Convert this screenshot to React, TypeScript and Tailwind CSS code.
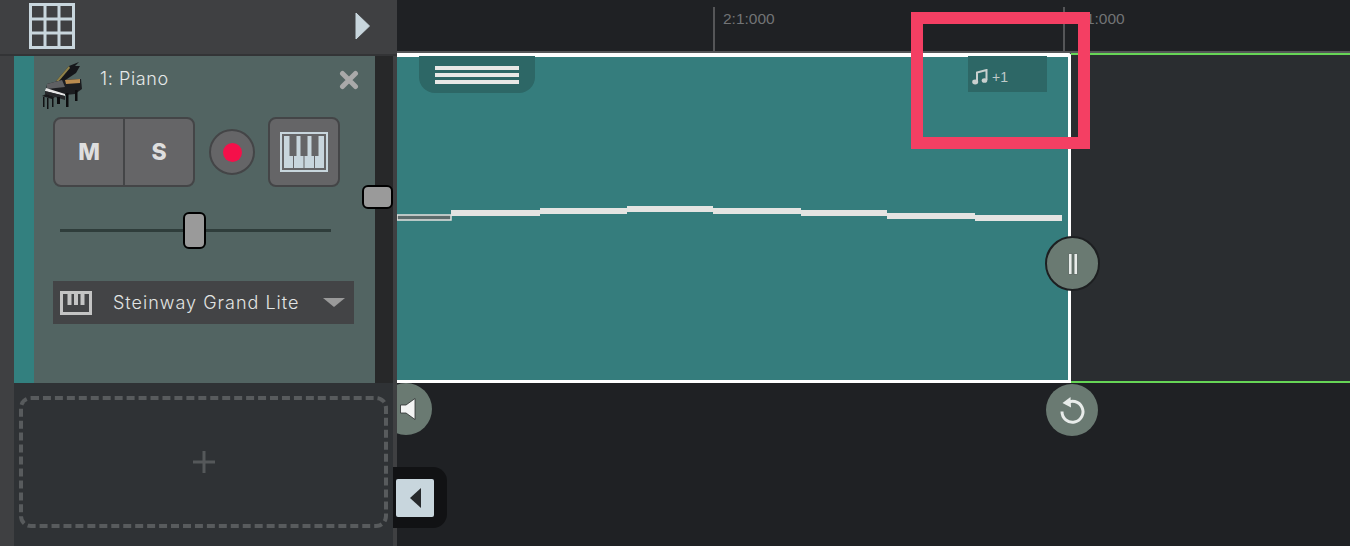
const font = { fontFamily: '"Inter", "Noto Sans", sans-serif' };

const PianoPhoto = () => (
  <svg width="42" height="48" viewBox="0 0 42 48" className="shrink-0">
    <polygon points="14,20 27,5 37,1 33,5 38,5 34,12 22,20" fill="#15161a" />
    <polygon points="14,20 27,5 28,7 17,20" fill="#8f8048" />
    <polygon points="5,23 20,19 39,18 40,28 33,33 14,35 4,30" fill="#1c1d20" />
    <polygon points="5,23 20,19 23,26 5,28" fill="#5f6063" />
    <polygon points="23,19 38,18 38,22 24,23" fill="#b98a4e" />
    <polygon points="4,27 23,33 23,35 3,30" fill="#e6e6e6" />
    <polygon points="3,30 23,35 23,39 3,33" fill="#26272a" />
    <rect x="15" y="36" width="3" height="7" fill="#0d0d0f" />
    <rect x="24" y="32" width="2.5" height="14" fill="#0d0d0f" />
    <rect x="33" y="29" width="2.5" height="11" fill="#0d0d0f" />
    <polygon points="0,35 10,38 13,36 4,33" fill="#17181a" />
    <rect x="1" y="36" width="1.5" height="10" fill="#101113" />
    <rect x="5" y="37" width="1.5" height="11" fill="#101113" />
    <rect x="10" y="37" width="1.5" height="9" fill="#101113" />
  </svg>
);

const KeysIcon = () => (
  <svg width="48" height="40" viewBox="0 0 48 40">
    <rect x="1" y="1" width="46" height="38" fill="none" stroke="#c8d6dd" strokeWidth="2" />
    <rect x="4" y="4" width="40" height="32" fill="#c8d6dd" />
    <g fill="#656567">
      <rect x="9.5" y="4" width="7" height="20" />
      <rect x="20.5" y="4" width="7" height="20" />
      <rect x="31.5" y="4" width="7" height="20" />
      <rect x="13" y="24" width="1" height="12" />
      <rect x="23.5" y="24" width="1" height="12" />
      <rect x="34" y="24" width="1" height="12" />
    </g>
  </svg>
);

const Melody = () => (
  <svg className="absolute left-0 top-0" width="668" height="323" viewBox="0 0 668 323">
    <rect x="0" y="158" width="54" height="5" fill="#5c6b6b" stroke="#e2e2e0" strokeWidth="1.5" />
    <rect x="54" y="153" width="89" height="6" fill="#e4e4e2" />
    <rect x="143" y="151" width="87" height="6" fill="#e4e4e2" />
    <rect x="230" y="149" width="86" height="6" fill="#e4e4e2" />
    <rect x="316" y="151" width="88" height="6" fill="#e4e4e2" />
    <rect x="404" y="153" width="86" height="6" fill="#e4e4e2" />
    <rect x="490" y="156" width="88" height="6" fill="#e4e4e2" />
    <rect x="578" y="158" width="87" height="6" fill="#e4e4e2" />
  </svg>
);

function Sidebar() {
  return (
    <aside className="relative z-10 flex w-[397px] shrink-0 flex-col bg-[#3f4042]" style={font}>
      <div className="flex h-[56px] shrink-0 items-center justify-between border-b-2 border-[#333436] pb-[3px] pl-[29px] pr-[27px]">
        <svg width="46" height="46" viewBox="0 0 46 46">
          <g fill="none" stroke="#c8d6dd" strokeWidth="3">
            <rect x="1.5" y="1.5" width="43" height="43" />
            <path d="M16 1.5V44.5M30 1.5V44.5M1.5 16H44.5M1.5 30H44.5" />
          </g>
        </svg>
        <svg width="15" height="28" viewBox="0 0 15 28">
          <path d="M1 1L14.5 14L1 27Z" fill="#c8d6dd" stroke="#c8d6dd" strokeLinejoin="round" />
        </svg>
      </div>

      <div className="ml-[14px] mr-[4px] flex h-[327px] shrink-0 bg-[#272829]">
        <div className="w-5 shrink-0 bg-[#33807f]" />
        <div className="flex w-[341px] shrink-0 flex-col bg-[#526462] px-[19px]">
          <div className="flex h-[61px] shrink-0 items-start">
            <div className="-ml-[11px] mt-[5px]">
              <PianoPhoto />
            </div>
            <span className="ml-[16px] mt-[13px] text-[18px] leading-5 font-light tracking-[0.6px] text-[#e6e9e8]">1: Piano</span>
            <svg className="ml-auto mr-[-3px] mt-[14px]" width="20" height="20" viewBox="0 0 20 20">
              <path d="M3.5 3.5L16.5 16.5M16.5 3.5L3.5 16.5" stroke="#a9a9a9" strokeWidth="5" strokeLinecap="round" />
            </svg>
          </div>

          <div className="flex h-[70px] shrink-0 items-center">
            <div className="flex h-full w-[142px] overflow-hidden rounded-[8px] border-2 border-[#444547] bg-[#656567] text-[23px] font-extrabold text-[#dedede]">
              <span className="flex w-[70px] items-center justify-center border-r-2 border-[#444547]">M</span>
              <span className="flex flex-1 items-center justify-center">S</span>
            </div>
            <div className="ml-[14px] flex size-[46px] items-center justify-center rounded-full border-2 border-[#444547] bg-[#656567]">
              <div className="size-[19px] rounded-full bg-[#f5104a]" />
            </div>
            <div className="ml-[13px] flex h-full w-[72px] items-center justify-center rounded-[8px] border-2 border-[#444547] bg-[#656567]">
              <KeysIcon />
            </div>
          </div>

          <div className="relative ml-[7px] mt-[25px] flex h-[37px] w-[271px] shrink-0 items-center">
            <div className="h-[3px] w-full bg-[#2f3d3b]" />
            <div className="absolute left-[123px] top-0 h-[37px] w-[23px] rounded-[6px] border-2 border-black bg-[#9a9a9a]" />
          </div>

          <div className="mt-[32px] flex h-[43px] w-[301px] shrink-0 items-center bg-[#434446] pl-[7px] pr-[9px]">
            <svg width="32" height="24" viewBox="0 0 32 24" className="shrink-0">
              <path d="M1.5 1.5H30.5V22.5H1.5Z" fill="none" stroke="#c4c4c4" strokeWidth="3" />
              <path d="M7.5 1H11.5V14H7.5ZM14 1H18V14H14ZM20.5 1H24.5V14H20.5Z" fill="#c4c4c4" />
            </svg>
            <span className="ml-[21px] text-[18px] leading-6 font-light tracking-[1px] text-[#e2e4e3]">Steinway Grand Lite</span>
            <svg className="ml-auto" width="22" height="10" viewBox="0 0 22 10">
              <path d="M0 0H22L11 9Z" fill="#9a9a9a" />
            </svg>
          </div>
        </div>
      </div>

      <div className="ml-[14px] mr-[4px] flex-1 bg-[#2f3235] pb-[18px] pl-[5px] pr-[5px] pt-[13px]">
        <div className="flex h-[132px] items-center justify-center rounded-[12px] border-4 border-dashed border-[#585b5d] text-[#55585a]">
          <svg width="22" height="22" viewBox="0 0 22 22">
            <path d="M11 0V22M0 11H22" stroke="currentColor" strokeWidth="3" />
          </svg>
        </div>
      </div>

      {/* scroll handle sits over the track panel */}
      <div className="absolute left-[362px] top-[185px] h-[24px] w-[31px] rounded-[6px] border-2 border-black bg-[#9a9a9a]" />
    </aside>
  );
}

function Timeline() {
  return (
    <main className="relative flex min-w-0 flex-1 flex-col bg-[#1f2124]">
      <div className="flex h-[53px] shrink-0 border-b-2 border-[#555658] text-[15.5px] text-[#727476]" style={{ fontFamily: '"Liberation Sans", sans-serif' }}>
        <div className="ml-[316px] mt-[7px] h-[44px] w-[350px] border-l-2 border-[#555658] pl-[8px] leading-6">2:1:000</div>
        <div className="mt-[7px] h-[44px] border-l-2 border-[#555658] pl-[8px] leading-6">3:1:000</div>
      </div>

      <div className="flex h-[330px] shrink-0">
        <div className="relative h-full w-[674px] shrink-0 rounded-tr-[3px] border-y-[3px] border-t-4 border-r-[3px] border-white bg-[#357d7d]">
          <Melody />
          <div className="absolute -top-[1px] left-[22px] flex h-[37px] w-[116px] flex-col items-center justify-center gap-[3px] rounded-b-[16px] bg-[#2d6766]">
            <div className="h-[4px] w-[84px] bg-[#e8e8e6]" />
            <div className="h-[4px] w-[84px] bg-[#e8e8e6]" />
            <div className="h-[4px] w-[84px] bg-[#e8e8e6]" />
          </div>
          <div className="absolute -top-[1px] left-[571px] flex h-[36px] w-[79px] items-center bg-[#2d6766] pl-[4px] pt-[6px] text-[14px] text-[#bfcac9]" style={{ fontFamily: '"Liberation Sans", sans-serif' }}>
            <svg width="16" height="16" viewBox="0 0 16 16">
              <path d="M5 13V3.5L14.5 1V11" fill="none" stroke="#c9d0cf" strokeWidth="2" />
              <ellipse cx="3.2" cy="13" rx="3" ry="2.4" fill="#c9d0cf" />
              <ellipse cx="12.5" cy="11.5" rx="2.8" ry="2.3" fill="#c9d0cf" />
            </svg>
            <span className="ml-[4px]">+1</span>
          </div>
        </div>
        <div className="h-full flex-1 border-y-2 border-[#66d556] bg-[#2a2d30]" />
      </div>

      <div className="flex-1" />

      {/* handles over the lane */}
      <div className="absolute left-[648px] top-[236px] flex size-[55px] items-center justify-center rounded-full border-2 border-[#1d1f21] bg-[#6a7a72]">
        <svg width="10" height="22" viewBox="0 0 10 22">
          <path d="M0.5 0.5H4V21.5H0.5ZM6 0.5H9.5V21.5H6Z" fill="#e8ecea" stroke="#55625c" strokeWidth="0.8" />
        </svg>
      </div>
      <div className="absolute left-[649px] top-[384px] flex size-[52px] items-center justify-center rounded-full bg-[#6a7a72]">
        <svg width="26" height="28" viewBox="0 0 26 28">
          <path d="M7 7.5A10.5 10.5 0 1 1 3 15.5" fill="none" stroke="#e8ecea" strokeWidth="3" />
          <path d="M11.5 1L3.5 7L12 11.5Z" fill="#e8ecea" />
        </svg>
      </div>
      <div className="absolute -left-[17px] top-[383px] flex size-[52px] items-center justify-end rounded-full bg-[#6a7a72] pr-[16px]">
        <svg width="16" height="22" viewBox="0 0 16 22">
          <path d="M0.5 7H6L15 0.5V21.5L6 15H0.5Z" fill="#f2f4f3" stroke="#2b2e2e" strokeWidth="0.8" />
        </svg>
      </div>
      <div className="absolute -left-[4px] top-[467px] z-20 flex h-[61px] w-[54px] items-center rounded-r-[14px] bg-[#111214] pl-[3px]">
        <div className="flex size-[38px] items-center justify-center rounded-[2px] bg-[#c8d6dd]">
          <svg width="11" height="20" viewBox="0 0 11 20">
            <path d="M11 0V20L0 10Z" fill="#26292b" />
          </svg>
        </div>
      </div>
    </main>
  );
}

export default function App() {
  return (
    <div className="relative flex h-[546px] w-[1350px] overflow-hidden">
      <Sidebar />
      <Timeline />
      {/* annotation box drawn on top of the screenshot */}
      <div className="absolute left-[911px] top-[12px] z-30 h-[137px] w-[179px] border-[12px] border-[#f43f63]" />
    </div>
  );
}
